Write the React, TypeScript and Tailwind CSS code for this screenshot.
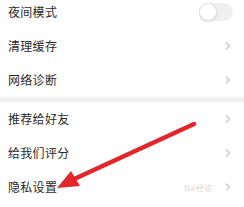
import React from 'react';

const rows1 = ['清理缓存', '网络诊断'];
const rows2 = ['推荐给好友', '给我们评分', '隐私设置'];

const Chevron = () => (
  <svg width="8" height="10" viewBox="0 0 8 10" className="mr-[12px]">
    <path d="M2 1.5 L5.5 5 L2 8.5" fill="none" stroke="#c4c4c4" strokeWidth="1.1" />
  </svg>
);

const Row: React.FC<{ label: string; children?: React.ReactNode }> = ({ label, children }) => (
  <div className="flex h-[34px] items-center justify-between bg-white pl-[8px]">
    <span className="text-[12px] leading-none tracking-[0.3px] text-[#2a2a2a]">{label}</span>
    {children ?? <Chevron />}
  </div>
);

export default function App() {
  return (
    <div
      className="relative h-[207px] w-[244px] overflow-hidden bg-white"
      style={{ fontFamily: '"Noto Sans CJK SC", sans-serif' }}
    >
      <div className="-mt-[5px] flex flex-col">
        <Row label="夜间模式">
          <div className="mr-[11px] flex h-[18px] w-[34px] items-center rounded-full bg-[#efefef]">
            <div className="h-[18px] w-[18px] rounded-full border border-[#e0e0e0] bg-white shadow-[0_1px_2px_rgba(0,0,0,0.12)]" />
          </div>
        </Row>
        {rows1.map((r) => (
          <Row key={r} label={r} />
        ))}
        <div className="h-[5px] bg-[#f1f1f1]" />
        {rows2.map((r) => (
          <Row key={r} label={r} />
        ))}
      </div>

      <span className="absolute left-[184px] top-[184px] text-[8px] leading-none text-[#dcdcdc]">Bai经验</span>

      <svg className="absolute left-0 top-0" width="244" height="207" viewBox="0 0 244 207">
        <line x1="194" y1="124" x2="72" y2="180" stroke="#e3262b" strokeWidth="4.5" strokeLinecap="round" />
        <polygon points="57,188 71,171 80,186" fill="#e3262b" />
      </svg>
    </div>
  );
}
